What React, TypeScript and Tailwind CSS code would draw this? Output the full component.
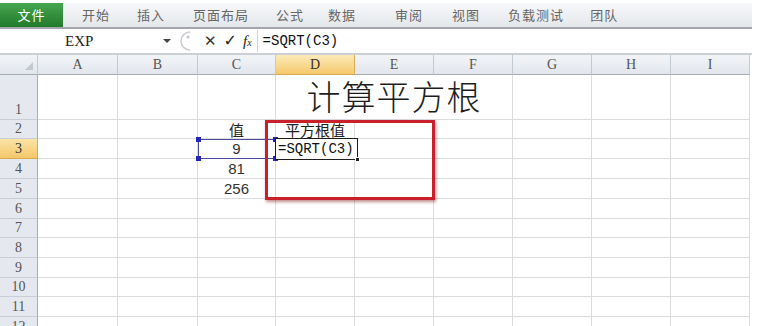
import React from "react";

const cols = [
  { k: "A", w: "w-[80px]" },
  { k: "B", w: "w-[80px]" },
  { k: "C", w: "w-[78px]" },
  { k: "D", w: "w-[79px]" },
  { k: "E", w: "w-[79px]" },
  { k: "F", w: "w-[79px]" },
  { k: "G", w: "w-[79px]" },
  { k: "H", w: "w-[79px]" },
  { k: "I", w: "w-[79px]" },
];

const rowH: Record<number, string> = {
  1: "h-[45px]",
  2: "h-[19px]",
  3: "h-[20px]",
  4: "h-[20px]",
  5: "h-[20px]",
  6: "h-[20px]",
  7: "h-[19px]",
  8: "h-[20px]",
  9: "h-[20px]",
  10: "h-[19px]",
  11: "h-[20px]",
  12: "h-[20px]",
};

const cjk = "font-['Noto_Sans_CJK_SC',sans-serif]";

function cellContent(r: number, c: string) {
  if (c === "C") {
    if (r === 2) return <span className={`${cjk} text-[15px] text-[#222] leading-none`}>值</span>;
    if (r === 3) return <span className="font-['Liberation_Sans',sans-serif] text-[15px] text-[#333] leading-none">9</span>;
    if (r === 4) return <span className="font-['Liberation_Sans',sans-serif] text-[15px] text-[#333] leading-none">81</span>;
    if (r === 5) return <span className="font-['Liberation_Sans',sans-serif] text-[15px] text-[#333] leading-none">256</span>;
  }
  if (c === "D") {
    if (r === 2) return <span className={`${cjk} text-[15px] text-[#222] leading-none`}>平方根值</span>;
  }
  return null;
}

function Row({ r }: { r: number }) {
  const active = r === 3;
  return (
    <div className={`flex ${rowH[r]}`}>
      <div
        className={`w-[38px] shrink-0 flex items-end justify-center pb-[2px] border-r border-b font-['Liberation_Serif',serif] text-[14px] leading-none ${
          active
            ? "bg-gradient-to-b from-[#fbe4a6] to-[#f4c66a] border-r-[#d9a94f] border-b-[#d9a94f] text-[#333]"
            : "bg-[#e5e9ef] border-r-[#a4acb7] border-b-[#c9ced6] text-[#555]"
        }`}
      >
        {r}
      </div>
      {r === 1 ? (
        <>
          {cols.slice(0, 3).map((c) => (
            <div key={c.k} className={`${c.w} shrink-0 border-r border-b border-[#dadcde]`} />
          ))}
          <div className="w-[237px] shrink-0 border-r border-b border-[#dadcde] flex items-end justify-center pb-[6px]">
            <span className={`${cjk} font-light text-[34px] leading-none text-[#1e1e1e] tracking-[1px]`}>计算平方根</span>
          </div>
          {cols.slice(6).map((c) => (
            <div key={c.k} className={`${c.w} shrink-0 border-r border-b border-[#dadcde]`} />
          ))}
        </>
      ) : (
        cols.map((c) => (
          <div
            key={c.k}
            className={`${c.w} shrink-0 border-r border-b border-[#dadcde] flex items-center justify-center overflow-visible`}
          >
            {cellContent(r, c.k)}
          </div>
        ))
      )}
    </div>
  );
}

export default function App() {
  const tabs: { t: string; ml: string }[] = [
    { t: "开始", ml: "ml-[19px]" },
    { t: "插入", ml: "ml-[27px]" },
    { t: "页面布局", ml: "ml-[28px]" },
    { t: "公式", ml: "ml-[27px]" },
    { t: "数据", ml: "ml-[24px]" },
    { t: "审阅", ml: "ml-[39px]" },
    { t: "视图", ml: "ml-[29px]" },
    { t: "负载测试", ml: "ml-[28px]" },
    { t: "团队", ml: "ml-[26px]" },
  ];
  return (
    <div className="w-[760px] h-[326px] bg-white overflow-hidden">
      <div className="w-[752px]">
        {/* Ribbon tabs */}
        <div className="h-[29px] pt-[3px] bg-white">
          <div className="h-[26px] flex items-stretch bg-gradient-to-b from-[#f7f8fa] to-[#e4e7eb] border-b-2 border-[#a3a7ad]">
            <div className="w-[63px] shrink-0 bg-gradient-to-b from-[#47a54f] to-[#1f7a2a] flex items-center justify-center">
              <span className={`${cjk} text-[13px] text-white tracking-[1px]`}>文件</span>
            </div>
            {tabs.map((t) => (
              <div key={t.t} className={`${t.ml} flex items-center`}>
                <span className={`${cjk} text-[13px] text-[#666] tracking-[1px]`}>{t.t}</span>
              </div>
            ))}
          </div>
        </div>

        {/* Formula bar */}
        <div className="h-[24px] flex items-center bg-white">
          <div className="w-[160px] shrink-0 pl-[65px] font-['Liberation_Serif',serif] text-[15px] text-[#222]">EXP</div>
          <svg width="10" height="8" viewBox="0 0 10 8" className="ml-[2px]">
            <path d="M1 2 L9 2 L5 6 Z" fill="#444" />
          </svg>
          <svg width="16" height="20" viewBox="0 0 16 20" className="ml-[6px]">
            <path d="M12 1 A9 9 0 0 0 12 19" stroke="#c9ccd1" strokeWidth="1.5" fill="none" />
            <circle cx="10" cy="6" r="1.6" fill="#c4c7cc" />
          </svg>
          <span className="ml-[10px] font-['DejaVu_Sans',sans-serif] text-[15px] font-bold text-[#333] leading-none">✕</span>
          <span className="ml-[7px] font-['DejaVu_Sans',sans-serif] text-[16px] font-bold text-[#222] leading-none">✓</span>
          <span className="ml-[6px] font-['Liberation_Serif',serif] italic text-[15px] text-[#222] leading-none">
            f<span className="text-[10px]">x</span>
          </span>
          <div className="ml-[5px] w-px h-[22px] bg-[#cfd2d6]" />
          <span className="ml-[5px] font-['Liberation_Mono',monospace] text-[14px] text-[#111]">=SQRT(C3)</span>
        </div>
        <div className="h-[2px] bg-[#ccd0d5]" />

        {/* Grid */}
        <div className="relative">
          {/* Column headers */}
          <div className="flex h-[20px]">
            <div className="w-[38px] shrink-0 bg-gradient-to-b from-[#f2f4f7] to-[#e2e6ec] border-r border-b border-r-[#c3c9d1] border-b-[#a4acb7] relative">
              <svg width="8" height="8" viewBox="0 0 8 8" className="absolute right-[4px] bottom-[4px]">
                <path d="M8 0 L8 8 L0 8 Z" fill="#c2c8d0" />
              </svg>
            </div>
            {cols.map((c) => (
              <div
                key={c.k}
                className={`${c.w} shrink-0 flex items-center justify-center border-r border-b font-['Liberation_Serif',serif] text-[14px] ${
                  c.k === "D"
                    ? "bg-gradient-to-b from-[#fcebb8] to-[#f5c86a] border-r-[#dcae57] border-b-[#d9a94f] text-[#333]"
                    : "bg-gradient-to-b from-[#f2f4f7] to-[#e2e6ec] border-r-[#c3c9d1] border-b-[#a4acb7] text-[#555]"
                }`}
              >
                {c.k}
              </div>
            ))}
          </div>
          {[1, 2, 3, 4, 5, 6, 7, 8, 9, 10, 11, 12].map((r) => (
            <Row key={r} r={r} />
          ))}

          {/* C3 reference highlight */}
          <div className="absolute left-[198px] top-[84px] w-[78px] h-[20px] border-[1.5px] border-[#4b4ba3]">
            <div className="absolute -left-[3px] -top-[3px] w-[5px] h-[5px] bg-[#2626b8]" />
            <div className="absolute -right-[3px] -top-[3px] w-[5px] h-[5px] bg-[#2626b8]" />
            <div className="absolute -left-[3px] -bottom-[3px] w-[5px] h-[5px] bg-[#2626b8]" />
            <div className="absolute -right-[3px] -bottom-[3px] w-[5px] h-[5px] bg-[#2626b8]" />
          </div>

          {/* D3 editing cell */}
          <div className="absolute left-[275px] top-[83px] w-[83px] h-[22px] border-[1.5px] border-[#1e1e1e] bg-white flex items-center pl-[2px]">
            <span className="font-['Liberation_Mono',monospace] text-[14px] text-[#111] leading-none">=SQRT(C3)</span>
            <div className="absolute -right-[3px] -bottom-[3px] w-[5px] h-[5px] bg-[#1e1e1e] border border-white" />
          </div>

          {/* Red annotation box */}
          <div className="absolute left-[265px] top-[65px] w-[170px] h-[80px] border-[3px] border-[#c9202a] shadow-[1px_2px_3px_rgba(120,0,0,0.45)]" />
        </div>
      </div>
    </div>
  );
}
